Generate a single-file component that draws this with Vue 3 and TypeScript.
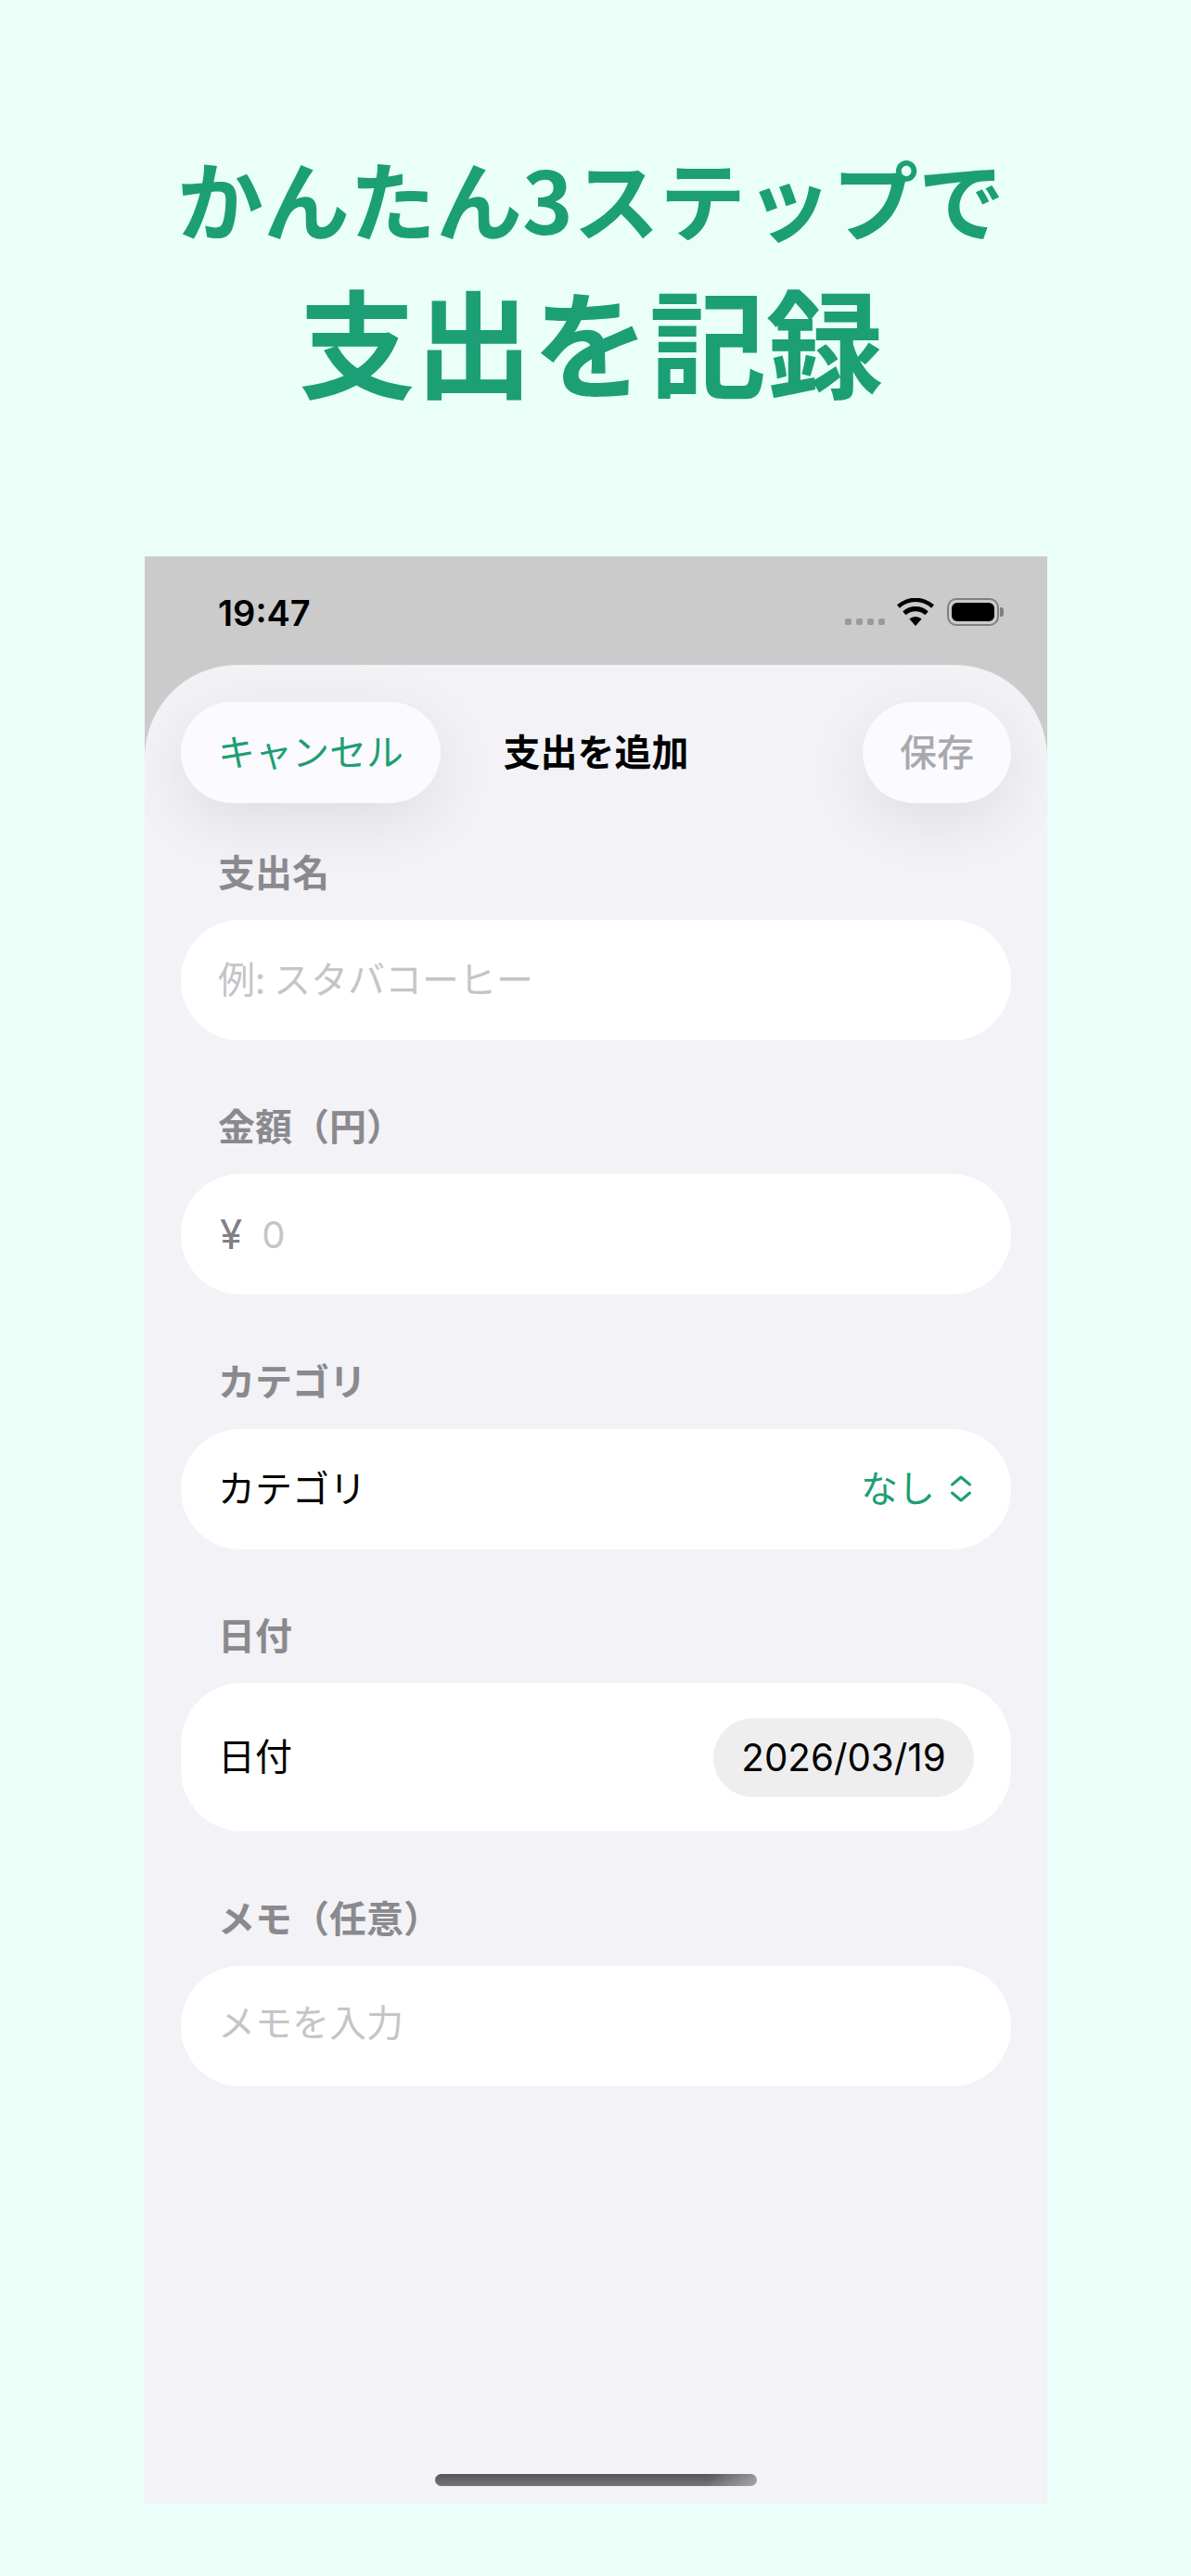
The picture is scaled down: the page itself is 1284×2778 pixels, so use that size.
<script setup lang="ts">
interface Field {
  label: string
  kind: 'text' | 'memo' | 'money' | 'select' | 'date'
  value: string
}
const fields: Field[] = [
  { label: '支出名', kind: 'text', value: '例: スタバコーヒー' },
  { label: '金額（円）', kind: 'money', value: '0' },
  { label: 'カテゴリ', kind: 'select', value: 'なし' },
  { label: '日付', kind: 'date', value: '2026/03/19' },
  { label: 'メモ（任意）', kind: 'memo', value: 'メモを入力' },
]
</script>

<template>
  <main class="page">
    <header class="hero">
      <h1 class="hero-sub">かんたん3ステップで</h1>
      <h2 class="hero-main">支出を記録</h2>
    </header>

    <section class="phone">
      <div class="status">
        <span class="time">19:47</span>
        <div class="status-icons">
          <span class="dots"><i></i><i></i><i></i><i></i></span>
          <svg class="wifi" viewBox="0 0 40 30" width="40" height="30">
            <path d="M20 30 13.4 22.6a9.6 9.6 0 0 1 13.2 0Z" fill="#000" />
            <path d="M9.6 18.3a15.4 15.4 0 0 1 20.8 0l3.4-3.9a20.6 20.6 0 0 0-27.6 0Z" fill="#000" />
            <path d="M2.9 10.7a25.4 25.4 0 0 1 34.2 0L40 7.300a30 30 0 0 0-40 0Z" fill="#000" />
          </svg>
          <span class="battery"><span class="battery-fill"></span></span>
        </div>
      </div>

      <div class="sheet">
        <nav class="nav">
          <button class="pill cancel"><span class="nudge">キャンセル</span></button>
          <span class="nav-title nudge">支出を追加</span>
          <button class="pill save"><span class="nudge">保存</span></button>
        </nav>

        <form class="form" @submit.prevent>
          <div v-for="f in fields" :key="f.label" class="field">
            <label class="label">{{ f.label }}</label>
            <div class="card" :class="{ 'card-date': f.kind === 'date' }">
              <template v-if="f.kind === 'text'">
                <span class="placeholder nudge">{{ f.value }}</span>
              </template>
              <template v-else-if="f.kind === 'memo'">
                <span class="placeholder memo">{{ f.value }}</span>
              </template>
              <template v-else-if="f.kind === 'money'">
                <span class="yen">¥</span>
                <span class="placeholder latin">{{ f.value }}</span>
              </template>
              <template v-else-if="f.kind === 'select'">
                <span class="row-name nudge">{{ f.label }}</span>
                <span class="select-value">
                  <span class="nudge">{{ f.value }}</span>
                  <svg class="chevrons" viewBox="0 0 24 29" width="24" height="29">
                    <path d="M2.500 10 12 2l9.500 8M2.500 19l9.500 8 9.500-8" fill="none" stroke="#1c9f74" stroke-width="3" stroke-linecap="round" stroke-linejoin="round" />
                  </svg>
                </span>
              </template>
              <template v-else>
                <span class="row-name nudge">{{ f.label }}</span>
                <span class="date-pill">{{ f.value }}</span>
              </template>
            </div>
          </div>
        </form>

        <div class="home"></div>
      </div>
    </section>
  </main>
</template>

<style>
html, body { margin: 0; background: #e9fff8; }
</style>

<style scoped>
.page {
  width: 1284px;
  height: 2778px;
  background: #e9fff8;
  display: flex;
  flex-direction: column;
  font-family: "Noto Sans CJK JP", "Inter", sans-serif;
  overflow: hidden;
}
.hero {
  height: 600px;
  flex: none;
  box-sizing: border-box;
  padding: 158px 10px 0 0;
  text-align: center;
  color: #1c9f74;
}
.hero-sub {
  margin: 0;
  font-size: 93px;
  line-height: 110px;
  font-weight: 700;
}
.hero-main {
  margin: 27px 0 0;
  font-size: 126px;
  line-height: 140px;
  font-weight: 700;
}
.phone {
  width: 973px;
  height: 2100px;
  margin-left: 156px;
  background: #cbcbcb;
  display: flex;
  flex-direction: column;
}
.nudge { padding-bottom: 6px; }
.status {
  height: 117px;
  flex: none;
  display: flex;
  justify-content: space-between;
  padding: 38px 52px 0 79px;
  box-sizing: border-box;
}
.time {
  font-family: "Inter", sans-serif;
  font-weight: 600;
  font-size: 38px;
  line-height: 46px;
  color: #000;
}
.status-icons {
  display: flex;
  align-items: flex-start;
  height: 40px;
  padding-top: 7px;
}
.dots {
  display: flex;
  gap: 5px;
  margin: 22px 13px 0 0;
}
.dots i {
  width: 7px;
  height: 7px;
  border-radius: 2px;
  background: #9a9a9a;
}
.wifi { display: block; }
.battery {
  position: relative;
  width: 56px;
  height: 30px;
  margin-left: 14px;
  box-sizing: border-box;
  border: 2px solid #808080;
  border-radius: 10px;
  padding: 3px;
  display: flex;
}
.battery::after {
  content: "";
  position: absolute;
  right: -7px;
  top: 8px;
  width: 4px;
  height: 10px;
  border-radius: 0 3px 3px 0;
  background: #808080;
}
.battery-fill {
  flex: 1;
  background: #000;
  border-radius: 6px;
}
.sheet {
  flex: 1;
  background: #f2f2f7;
  border-radius: 100px 100px 0 0;
  display: flex;
  flex-direction: column;
  overflow: hidden;
}
.nav {
  display: grid;
  grid-template-columns: 1fr auto 1fr;
  align-items: center;
  margin: 40px 39px 0;
}
.pill {
  height: 109px;
  border: 0;
  border-radius: 55px;
  background: #fafaff;
  box-shadow: 0 18px 70px rgba(0, 0, 0, 0.09);
  font-family: inherit;
  font-size: 40px;
  padding: 0;
  display: flex;
  align-items: center;
  justify-content: center;
}
.cancel {
  width: 280px;
  color: #1c9f74;
}
.save {
  width: 160px;
  justify-self: end;
  color: #a9a9ad;
  font-weight: 500;
}
.nav-title {
  font-size: 40px;
  font-weight: 700;
  color: #000;
}
.form {
  display: flex;
  flex-direction: column;
  gap: 69.4px;
  padding: 51px 39px 0;
}
.label {
  display: block;
  padding-left: 40px;
  font-size: 40px;
  line-height: 44px;
  height: 44px;
  font-weight: 700;
  color: #8a8a8e;
  margin-bottom: 31px;
}
.card {
  height: 130px;
  box-sizing: border-box;
  border-radius: 64px;
  background: #fff;
  padding: 0 42px 0 40px;
  display: flex;
  align-items: center;
  font-size: 40px;
}
.card-date {
  height: 160px;
  border-radius: 66px;
  justify-content: space-between;
  padding-right: 40px;
}
.placeholder { color: #c5c5c8; }
.memo { padding-bottom: 12px; }
.latin {
  font-family: "Inter", sans-serif;
  font-size: 40px;
}
.yen {
  font-family: "Inter", sans-serif;
  font-size: 44px;
  color: #808084;
  margin: 0 21px 0 2px;
}
.row-name { color: #000; }
.select-value {
  margin-left: auto;
  display: flex;
  align-items: center;
  gap: 16px;
  color: #1c9f74;
}
.chevrons { display: block; }
.date-pill {
  width: 281px;
  height: 85px;
  border-radius: 43px;
  background: #eeeeef;
  display: flex;
  align-items: center;
  justify-content: center;
  font-family: "Inter", sans-serif;
  font-size: 40.300px;
  color: #000;
}
.home {
  flex: none;
  width: 347px;
  height: 13px;
  margin: auto 0 19px 313px;
  border-radius: 7px;
  background:
    linear-gradient(90deg, rgba(242, 242, 247, 0) 85%, rgba(242, 242, 247, 0.4) 100%),
    linear-gradient(180deg, #555555, #767676);
}
</style>
